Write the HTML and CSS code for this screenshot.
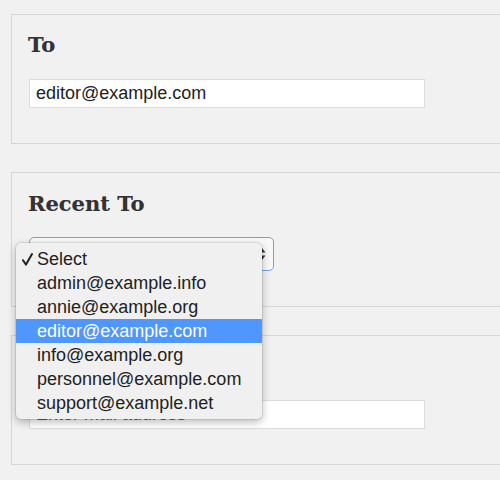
FILE: index.html
```html
<!DOCTYPE html>
<html>
<head>
<meta charset="utf-8">
<link rel="stylesheet" href="styles.css">
</head>
<body>
<div class="page">
  <section class="panel">
    <h2 class="title">To</h2>
    <input class="field" type="text" value="editor@example.com">
  </section>
  <section class="panel panel-select">
    <h2 class="title title-low">Recent To</h2>
    <div class="select-wrap">
      <div class="select">
        <span class="select-text">Select</span>
        <svg class="select-arrows" width="8" height="14" viewBox="0 0 8 14"><path d="M4 1 L7.5 5.5 H0.5 Z M4 13 L7.5 8.5 H0.5 Z" fill="#333"/></svg>
      </div>
      <ul class="menu">
        <li class="item checked"><svg class="check" width="11" height="13" viewBox="0 0 11 13"><path d="M1 7.2 L4 11.6 L10 1" fill="none" stroke="#222" stroke-width="2" stroke-linecap="round" stroke-linejoin="round"/></svg>Select</li>
        <li class="item">admin@example.info</li>
        <li class="item">annie@example.org</li>
        <li class="item active">editor@example.com</li>
        <li class="item">info@example.org</li>
        <li class="item">personnel@example.com</li>
        <li class="item">support@example.net</li>
      </ul>
    </div>
  </section>
  <section class="panel">
    <h2 class="title">Forward To</h2>
    <input class="field" type="text" placeholder="Enter mail address">
  </section>
</div>
</body>
</html>
```

FILE: styles.css
```css
html, body {
  margin: 0;
  padding: 0;
  background: #f1f1f1;
  overflow: hidden;
}
.page {
  padding-top: 14px;
  padding-left: 11px;
}
.panel {
  border: 1px solid #d6d6d6;
  border-right: none;
  padding: 18px 0 35px 17px;
  margin-bottom: 28px;
}
.title {
  margin: 0 0 22px -1px;
  font-family: "DejaVu Serif", serif;
  font-weight: bold;
  font-size: 21px;
  line-height: 24px;
  height: 24px;
  color: #333;
  text-shadow: 0 0 0.5px rgba(0, 0, 0, 0.35);
}
.title-low {
  padding-top: 1px;
  margin-bottom: 21px;
}
.field {
  display: block;
  box-sizing: border-box;
  width: 396px;
  height: 29px;
  margin: 0;
  padding: 0 6px;
  border: 1px solid #dcdcdc;
  background: #fff;
  font-family: "Liberation Sans", Arial, sans-serif;
  font-size: 18px;
  color: #222;
  outline: none;
}
.field::placeholder {
  color: #666;
}
.select-wrap {
  position: relative;
  width: 245px;
  height: 34px;
}
.select {
  box-sizing: border-box;
  width: 245px;
  height: 34px;
  border: 1px solid #6fa2e6;
  border-radius: 5px;
  background: #f8f8f8;
  display: flex;
  align-items: center;
  justify-content: space-between;
  padding: 0 7px 0 8px;
  font-family: "Liberation Sans", Arial, sans-serif;
  font-size: 18px;
  color: #222;
}
.select-arrows {
  display: block;
}
.menu {
  position: absolute;
  left: -13px;
  top: 6px;
  width: 246px;
  margin: 0;
  padding: 4px 0;
  list-style: none;
  background: #f0f0f0;
  border-radius: 5px;
  box-shadow: 0 0 0 1px rgba(0,0,0,0.08), 0 3px 9px rgba(0,0,0,0.28);
  z-index: 2;
}
.item {
  position: relative;
  height: 24px;
  line-height: 24px;
  padding-left: 21px;
  font-family: "Liberation Sans", Arial, sans-serif;
  font-size: 18px;
  color: #222;
  white-space: nowrap;
}
.item.active {
  background: #4f96fe;
  color: #fff;
}
.check {
  position: absolute;
  left: 6px;
  top: 6px;
}
```
